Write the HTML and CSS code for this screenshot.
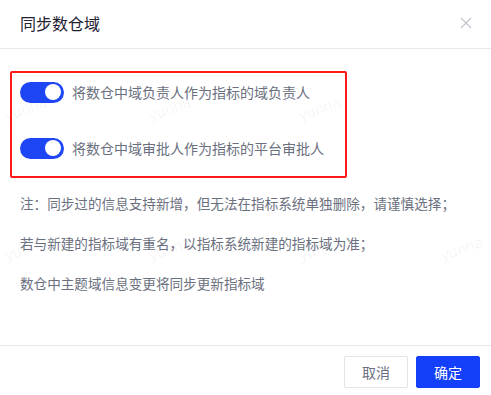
FILE: index.html
```html
<!DOCTYPE html>
<html lang="zh-CN">
<head>
  <meta charset="UTF-8" />
  <title>同步数仓域</title>
  <link rel="stylesheet" href="styles.css">
</head>
<body>
  <div class="modal">
    <div class="modal-header">
      <span class="modal-title">同步数仓域</span>
      <span class="modal-close">
        <svg width="12" height="12" viewBox="0 0 12 12"><path d="M1 1L11 11M11 1L1 11" stroke="#c4c6cf" stroke-width="1.3" fill="none"/></svg>
      </span>
    </div>

    <div class="modal-body">
      <div class="option-box">
        <div class="option">
          <span class="switch on"><span class="knob"></span></span>
          <span class="option-text">将数仓中域负责人作为指标的域负责人</span>
        </div>
        <div class="option">
          <span class="switch on"><span class="knob"></span></span>
          <span class="option-text">将数仓中域审批人作为指标的平台审批人</span>
        </div>
      </div>

      <div class="notes">
        <p>注：同步过的信息支持新增，但无法在指标系统单独删除，请谨慎选择；</p>
        <p>若与新建的指标域有重名，以指标系统新建的指标域为准；</p>
        <p>数仓中主题域信息变更将同步更新指标域</p>
      </div>
    </div>

    <div class="modal-footer">
      <button class="btn">取消</button>
      <button class="btn primary">确定</button>
    </div>

    <div class="watermark">
      <span style="left:4px;top:100px">yunna</span>
      <span style="left:148px;top:100px">yunna</span>
      <span style="left:298px;top:100px">yunna</span>
      <span style="left:4px;top:240px">yunna</span>
      <span style="left:148px;top:240px">yunna</span>
      <span style="left:298px;top:240px">yunna</span>
      <span style="left:440px;top:240px">yunna</span>
    </div>
  </div>
</body>
</html>
```

FILE: styles.css
```css
* { box-sizing: border-box; margin: 0; padding: 0; }
body {
  font-family: "Noto Sans CJK SC", "Noto Sans", sans-serif;
  background: #fff;
  width: 491px;
  height: 395px;
  overflow: hidden;
}

.modal {
  position: relative;
  width: 491px;
  height: 395px;
  display: flex;
  flex-direction: column;
  overflow: hidden;
}

/* -- Header -- */
.modal-header {
  height: 49px;
  border-bottom: 1px solid #e8e9ef;
  display: flex;
  align-items: center;
  justify-content: space-between;
  padding: 0 19px 0 20px;
}
.modal-title {
  font-size: 16px;
  color: #1f2233;
  margin-top: -3px;
}
.modal-close {
  display: flex;
  margin-top: -3px;
}

/* -- Body -- */
.modal-body {
  flex: 1;
  padding: 22px 10px 0;
}
.option-box {
  width: 337px;
  height: 107px;
  border: 2px solid #ff1a1a;
  border-radius: 2px;
  padding: 8px 0 0 8px;
  display: flex;
  flex-direction: column;
  gap: 34px;
}
.option {
  display: flex;
  align-items: center;
  height: 22px;
}
.switch {
  width: 44px;
  height: 21px;
  border-radius: 11px;
  background: #1e46f5;
  position: relative;
  margin-right: 8px;
}
.knob {
  position: absolute;
  top: 2.5px;
  right: 3px;
  width: 16px;
  height: 16px;
  border-radius: 50%;
  background: #fff;
}
.option-text {
  font-size: 14px;
  color: #6b7080;
}

.notes {
  padding: 14px 0 0 10px;
  display: flex;
  flex-direction: column;
  gap: 18px;
}
.notes p {
  font-size: 13.6px;
  line-height: 22px;
  color: #6b7080;
}

/* -- Footer -- */
.modal-footer {
  height: 50px;
  border-top: 1px solid #e8e9ef;
  display: flex;
  justify-content: flex-end;
  align-items: flex-start;
  gap: 8px;
  padding: 10px 11px 0 0;
}
.btn {
  width: 64px;
  height: 32px;
  border: 1px solid #e3e4ea;
  border-radius: 2px;
  background: #fff;
  color: #6b7080;
  font-family: inherit;
  font-size: 14px;
}
.btn.primary {
  background: #1440fb;
  border-color: #1440fb;
  color: #fff;
}

/* -- Watermark -- */
.watermark span {
  position: absolute;
  font-family: "Liberation Sans", sans-serif;
  font-size: 16px;
  color: rgba(0, 0, 0, 0.05);
  transform: rotate(-20deg);
  pointer-events: none;
}
```
